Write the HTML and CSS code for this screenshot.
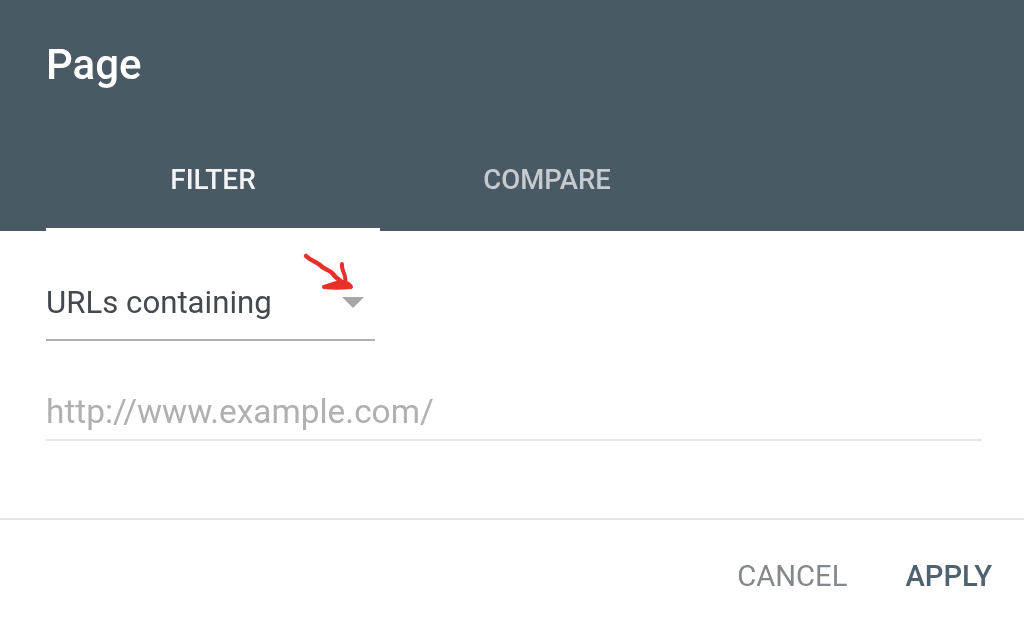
FILE: index.html
```html
<!DOCTYPE html>
<html lang="en">
<head>
  <meta charset="UTF-8" />
  <title>Page filter</title>
  <link rel="stylesheet" href="styles.css">
</head>
<body>
  <div class="header">
    <h1 class="title">Page</h1>
    <div class="tabs">
      <div class="tab active">FILTER</div>
      <div class="tab">COMPARE</div>
    </div>
  </div>

  <div class="content">
    <div class="select">
      <span>URLs containing</span>
      <i class="caret"></i>
      <!-- red hand drawn arrow -->
      <svg class="arrow" width="60" height="50" viewBox="0 0 60 50">
        <path d="M6 5 C11 10 15 10 20 14 C24 19 29 18 33 23 C36 28 41 29 44 33" fill="none" stroke="#e8302a" stroke-width="4.5" stroke-linecap="round"/>
        <path d="M42 13 C41 20 47 24 45 31 M24 36 C31 34 38 30 44 31 C47 32 50 33 51 36 C42 37 32 37 24 36 Z" fill="#e8302a" stroke="#e8302a" stroke-width="4" stroke-linecap="round" stroke-linejoin="round"/>
      </svg>
    </div>
    <div class="url-input">http://www.example.com/</div>
  </div>

  <div class="actions">
    <button class="btn">CANCEL</button>
    <button class="btn primary">APPLY</button>
  </div>
</body>
</html>
```

FILE: styles.css
```css
* {
  margin: 0;
  padding: 0;
  box-sizing: border-box;
  font-family: 'Roboto', sans-serif;
}

html, body {
  height: 621px;
  overflow: hidden;
}

body {
  background: #fff;
  display: flex;
  flex-direction: column;
  filter: blur(0.5px);
}

/* Header */
.header {
  background: #4a5a64;
  height: 231px;
  padding: 40px 46px 0;
  display: flex;
  flex-direction: column;
}

.title {
  font-size: 42px;
  font-weight: 500;
  line-height: 50px;
  color: #fff;
}

.tabs {
  display: flex;
  margin-top: 52px;
}

.tab {
  width: 334px;
  height: 89px;
  padding-top: 22px;
  text-align: center;
  font-size: 27.5px;
  font-weight: 500;
  line-height: 32px;
  color: #c6cbcf;
}

.tab.active {
  font-size: 28px;
  color: #f3f4f5;
  border-bottom: 3px solid #fff;
}

/* Fields */
.content {
  flex: 1;
  padding: 0 42px 0 46px;
  border-bottom: 2px solid #e6e6e6;
}

.select {
  position: relative;
  width: 329px;
  height: 110px;
  padding-top: 54px;
  font-size: 31.2px;
  line-height: 36px;
  color: #45494d;
  border-bottom: 2px solid #b0b0b0;
}

.caret {
  position: absolute;
  left: 296px;
  top: 66px;
  border-left: 11px solid transparent;
  border-right: 11px solid transparent;
  border-top: 11px solid #a6a6a6;
}

.arrow {
  position: absolute;
  left: 254px;
  top: 20px;
}

.url-input {
  margin-top: 53px;
  height: 47px;
  font-size: 33.4px;
  line-height: 36px;
  color: #b0b0b0;
  border-bottom: 2px solid #e6e6e6;
}

/* Footer buttons */
.actions {
  height: 101px;
  padding: 36px 32px 0 0;
  display: flex;
  justify-content: flex-end;
  gap: 58px;
}

.btn {
  background: none;
  border: none;
  height: 40px;
  font-size: 29.2px;
  color: #85888b;
}

.btn.primary {
  color: #4e626f;
  font-weight: 500;
}
```
